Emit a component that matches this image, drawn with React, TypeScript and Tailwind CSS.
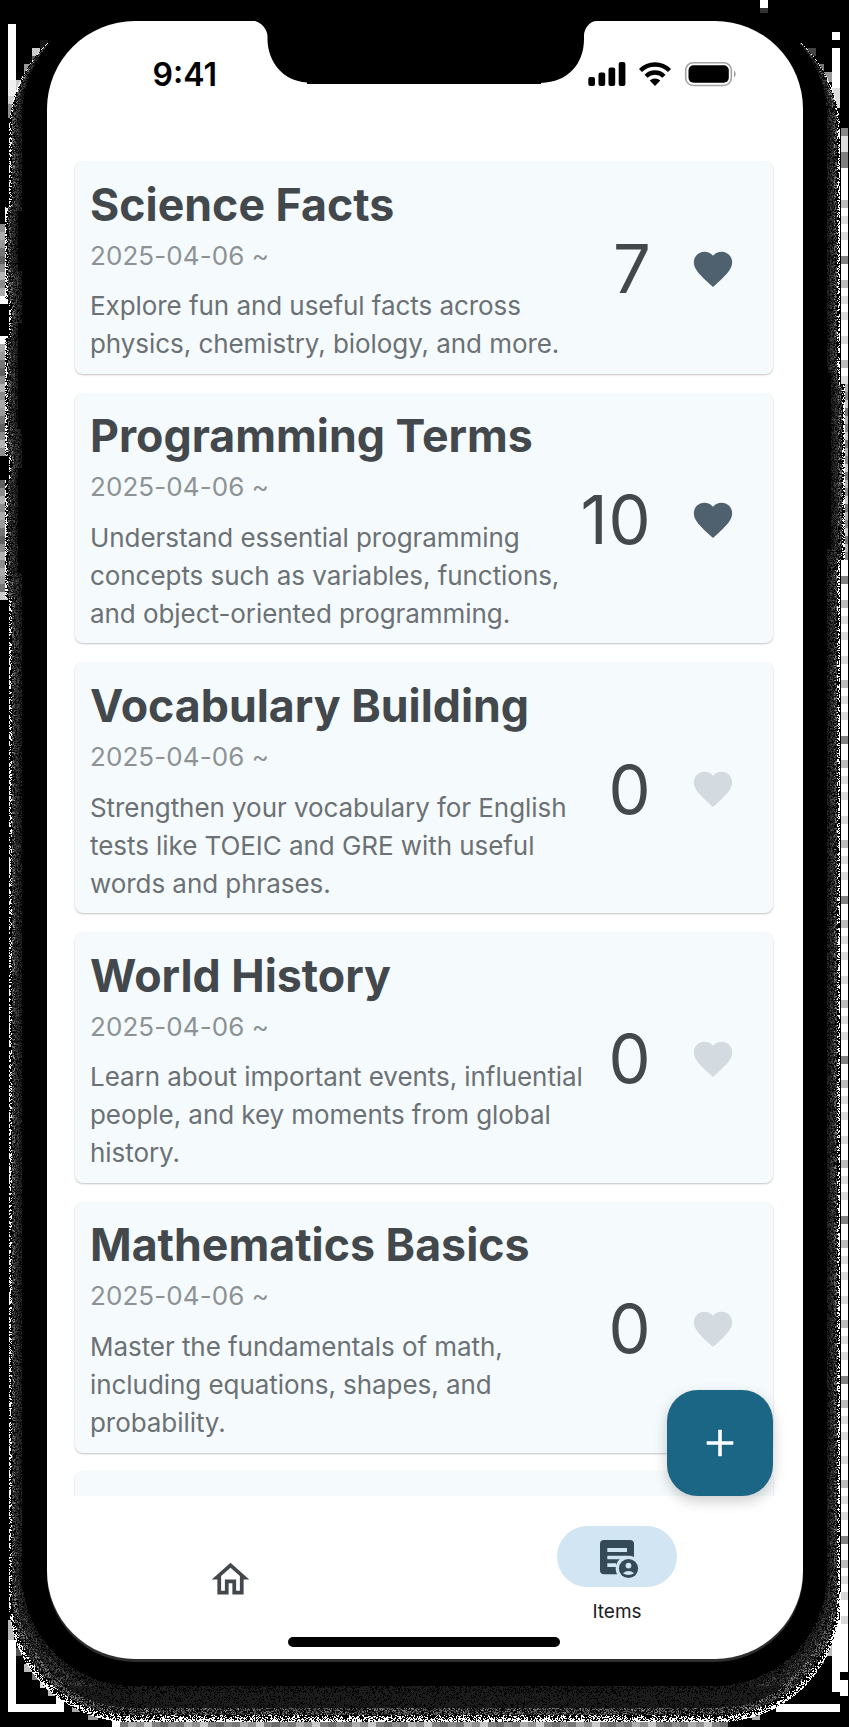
import React from "react";

type Deck = { title: string; lines: string[]; count: number; liked: boolean };

const decks: Deck[] = [
  {
    title: "Science Facts",
    lines: ["Explore fun and useful facts across", "physics, chemistry, biology, and more."],
    count: 7,
    liked: true,
  },
  {
    title: "Programming Terms",
    lines: ["Understand essential programming", "concepts such as variables, functions,", "and object-oriented programming."],
    count: 10,
    liked: true,
  },
  {
    title: "Vocabulary Building",
    lines: ["Strengthen your vocabulary for English", "tests like TOEIC and GRE with useful", "words and phrases."],
    count: 0,
    liked: false,
  },
  {
    title: "World History",
    lines: ["Learn about important events, influential", "people, and key moments from global", "history."],
    count: 0,
    liked: false,
  },
  {
    title: "Mathematics Basics",
    lines: ["Master the fundamentals of math,", "including equations, shapes, and", "probability."],
    count: 0,
    liked: false,
  },
];

// Signed distance to a rounded rectangle, negative inside.
function roundedDistance(x: number, y: number, l: number, t: number, r: number, b: number, rad: number) {
  const qx = Math.abs(x - (l + r) / 2) - (r - l) / 2 + rad;
  const qy = Math.abs(y - (t + b) / 2) - (b - t) / 2 + rad;
  return Math.hypot(Math.max(qx, 0), Math.max(qy, 0)) + Math.min(Math.max(qx, qy), 0) - rad;
}

const shades = ["#1c1c1c", "#303030", "#484848", "#686868", "#909090", "#ffffff"];

// Grainy shadow around the handset, one path per grey level.
function buildGrain(): string[] {
  let seed = 20250406;
  const random = () => {
    seed = (seed * 1664525 + 1013904223) >>> 0;
    return seed / 4294967296;
  };
  const parts: string[][] = shades.map(() => []);
  for (let y = 40; y < 1724; y++) {
    for (let x = 3; x < 848; x++) {
      if (y < 1570 && x > 50 && x < 800) continue;
      const leftButton = (y > 210 && y < 271) || (y > 322 && y < 429) || (y > 467 && y < 573);
      const rightButton = y > 372 && y < 549;
      const px = x + 0.5;
      const py = y + 0.5;
      const body = roundedDistance(px, py, leftButton ? 18 : 22, 5, rightButton ? 831 : 827, 1686, 112);
      if (body <= 0) continue;
      const wideLeft = y > 206 && y < 598 && !(y > 300 && y < 338) && !(y > 455 && y < 480);
      const wideRight = y > 384 && y < 560;
      const outer = roundedDistance(px, py, wideLeft ? 5 : 9, 11, wideRight ? 845 : 840, 1722, 121);
      if (outer >= 0) continue;
      const t = body / (body - outer);
      const n = random();
      let shade = -1;
      if (t > 0.8) shade = n < 0.2 + (t - 0.8) * 2.6 ? 5 : -1;
      else if (t > 0.5) shade = n < 0.3 ? -1 : n < 0.55 ? 0 : n < 0.78 ? 2 : n < 0.93 ? 3 : 4;
      else if (t > 0.2) shade = n < 0.2 ? -1 : n < 0.6 ? 0 : n < 0.85 ? 1 : 2;
      else shade = n < 0.35 ? -1 : n < 0.9 ? 0 : 1;
      if (py > 1686 && t < 0.6 && shade > 0) shade = 0;
      if (shade >= 0) parts[shade].push(`M${x} ${y}h1v1h-1z`);
    }
  }
  return parts.map((p) => p.join(""));
}

const grain = buildGrain();

type Block = [number, number, number, number, string];

const blocks: Block[] = [
  [8, 24, 8, 56, "#fff"],
  [8, 80, 8, 16, "#f0f0f0"],
  [8, 96, 8, 8, "#d5d5d5"],
  [8, 104, 8, 14, "#909090"],
  [16, 88, 6, 8, "#b0b0b0"],
  [16, 80, 8, 8, "#ccc"],
  [24, 64, 8, 8, "#999"],
  [24, 72, 6, 8, "#777"],
  [32, 48, 8, 8, "#ccc"],
  [32, 56, 6, 8, "#555"],
  [40, 40, 8, 8, "#181818"],
  [760, 0, 8, 8, "#fff"],
  [760, 8, 8, 5, "#333"],
  [832, 32, 8, 8, "#fff"],
  [832, 48, 8, 40, "#fff"],
  [832, 88, 8, 20, "#ddd"],
  [808, 48, 8, 8, "#444"],
  [818, 64, 6, 8, "#777"],
  [824, 72, 8, 10, "#999"],
  [8, 1620, 6, 20, "#bbb"],
  [8, 1640, 8, 72, "#fff"],
  [16, 1704, 48, 8, "#fff"],
  [56, 1696, 8, 8, "#fff"],
  [16, 1648, 8, 8, "#555"],
  [24, 1664, 8, 8, "#bbb"],
  [32, 1672, 8, 8, "#777"],
  [40, 1680, 8, 8, "#ddd"],
  [48, 1688, 8, 8, "#bbb"],
  [72, 1704, 8, 8, "#aaa"],
  [88, 1712, 10, 8, "#999"],
  [832, 1620, 8, 72, "#fff"],
  [840, 1592, 8, 104, "#fff"],
  [840, 1672, 8, 8, "#000"],
  [776, 1704, 64, 8, "#fff"],
  [824, 1640, 8, 16, "#bbb"],
  [816, 1656, 8, 8, "#666"],
  [808, 1664, 8, 8, "#888"],
  [800, 1672, 8, 8, "#ccc"],
  [792, 1680, 8, 8, "#777"],
  [784, 1688, 8, 8, "#bbb"],
  [776, 1696, 8, 8, "#999"],
  [752, 1704, 8, 16, "#aaa"],
  [841, 128, 7, 1464, "#fff"],
  [841, 128, 7, 8, "#888"],
  [841, 136, 7, 16, "#ddd"],
  [841, 152, 7, 16, "#808080"],
];

for (let y = 224; y < 600; y += 8) {
  if ((y >= 304 && y < 336) || (y >= 456 && y < 480)) continue;
  const tones = ["#8c8c8c", "#ababab", "#9a9a9a", "#757575", "#606060", "#8a8a8a", "#b4b4b4"];
  blocks.push([0, y, 8, 8, y === 296 || y === 336 ? "#fff" : y === 592 ? "#ccc" : tones[(y / 8) % 7]]);
}
for (let y = 200; y < 1590; y += 80) {
  blocks.push([841, y, 7, 8, "#bcbcbc"], [841, y + 16, 7, 8, "#dcdcdc"], [841, y + 32, 7, 8, "#dadada"]);
  blocks.push([841, y + 56, 7, 8, (y / 80) % 2 < 1 ? "#858585" : "#dadada"]);
}
for (let y = 384; y < 560; y += 8) {
  blocks.push([841, y, 7, 8, ["#b0b0b0", "#888", "#c8c8c8", "#777"][(y / 8) % 4]]);
}
for (let x = 112; x < 728; x += 8) {
  blocks.push([x, 1721, 8, 6, x === 112 ? "#fff" : ["#8c8c8c", "#777", "#adadad", "#909090", "#c8c8c8", "#808080", "#6c6c6c"][(x / 8) % 7]]);
}

function HandsetEdge() {
  return (
    <svg aria-hidden="true" className="pointer-events-none absolute inset-0" width="849" height="1727" viewBox="0 0 849 1727" shapeRendering="crispEdges">
      {blocks.map(([x, y, w, h, c], i) => (
        <rect key={i} x={x} y={y} width={w} height={h} fill={c} />
      ))}
      <rect x="9" y="11" width="831" height="1711" rx="121" fill="#000" />
      <path d="M5 206h8v94h-8zM5 338h8v117h-8zM5 480h8v118h-8zM836 384h9v176h-9z" fill="#000" />
      {grain.map((d, i) => (
        <path key={i} d={d} fill={shades[i]} />
      ))}
    </svg>
  );
}

function Notch() {
  return (
    <svg aria-hidden="true" className="absolute left-[200px] top-0" width="356" height="63" viewBox="247 21 356 63">
      <path d="M247 20H603V21H597C589 21 584 29 584 36V39C584 64 568 82 541 83V84H307V82.500C282 81 268 61 267.500 40V36C267 29 262 23 255 21H247Z" fill="#000" />
    </svg>
  );
}

function StatusIcons() {
  return (
    <svg aria-hidden="true" width="150" height="26" viewBox="588 61 150 26">
      <rect x="588.300" y="77" width="6.700" height="9" rx="2" />
      <rect x="598.500" y="72.500" width="6.700" height="13.500" rx="2" />
      <rect x="608.500" y="67.500" width="6.700" height="18.500" rx="2" />
      <rect x="618.700" y="62" width="6.700" height="24" rx="2" />
      <g fill="none" stroke="#000" strokeWidth="4.300">
        <path d="M640.500 70.500A20.500 20.500 0 0 1 669.500 70.500" />
        <path d="M646 76.200A12.800 12.800 0 0 1 664 76.200" />
      </g>
      <path d="M649.700 80.500A7.700 7.700 0 0 1 660.300 80.500L655 86Z" />
      <rect x="685.700" y="62.700" width="45.600" height="22.800" rx="7.500" fill="none" stroke="#a3a3a3" strokeWidth="1.600" />
      <rect x="688.500" y="65.300" width="40.300" height="17.500" rx="5" />
      <path d="M734 70.500a4.500 4.500 0 0 1 0 7z" fill="#9a9a9a" />
    </svg>
  );
}

function Heart({ liked }: { liked: boolean }) {
  return (
    <svg aria-hidden="true" className="mb-[3px] shrink-0" width="46" height="46" viewBox="0 0 24 24" fill={liked ? "#4f616e" : "#d3dae0"}>
      <path d="M12 21.350l-1.450-1.320C5.400 15.360 2 12.280 2 8.500 2 5.420 4.420 3 7.500 3c1.740 0 3.410.810 4.500 2.090C13.090 3.810 14.760 3 16.500 3 19.580 3 22 5.420 22 8.500c0 3.780-3.400 6.860-8.550 11.540L12 21.350z" />
    </svg>
  );
}

function DeckCard({ deck }: { deck: Deck }) {
  return (
    <article className="flex shrink-0 items-center rounded-[8px] bg-[#f5fafd] pt-[16.500px] pr-[37.500px] pb-[10.500px] pl-[15px] shadow-[0_1px_2px_rgba(0,0,0,0.24)]">
      <div className="min-w-0 flex-1 self-start whitespace-nowrap">
        <h2 className="text-[44.700px] leading-[54px] font-bold text-[#42484c]">{deck.title}</h2>
        <p className="mt-[5px] text-[26px] leading-[37.800px] tracking-[0.080px] text-[#8d9295]">2025-04-06 ~</p>
        <p className="mt-[13px] text-[26px] leading-[38px] tracking-[-0.060px] text-[#6b7174]">
          {deck.lines.map((line) => (
            <span key={line} className="block">
              {line}
            </span>
          ))}
        </p>
      </div>
      <span className="mr-[38px] mb-[2px] text-[66.800px] leading-[76px] tracking-[0.800px] text-[#42484c]">{deck.count}</span>
      <Heart liked={deck.liked} />
    </article>
  );
}

export default function App() {
  return (
    <div className="relative flex h-[1727px] w-[849px] overflow-hidden bg-black pt-[21px] pl-[47px] font-['Inter',sans-serif]">
      <HandsetEdge />
      <main className="relative flex h-[1638px] w-[756px] flex-col overflow-hidden rounded-[88px] bg-white shadow-[0_3px_0_#2e2e2e]">
        <Notch />
        <header className="flex h-[140px] shrink-0 items-start justify-between pt-[40px] pr-[65px] pl-[105.500px]">
          <span className="text-[32px] leading-[28px] font-semibold">9:41</span>
          <StatusIcons />
        </header>
        <section className="relative h-[1335px] shrink-0">
          <div className="flex h-full flex-col gap-[18.900px] overflow-hidden pr-[30px] pl-[28px]">
            {decks.map((deck) => (
              <DeckCard key={deck.title} deck={deck} />
            ))}
            <div className="h-[251px] shrink-0 rounded-[8px] bg-[#f5fafd] shadow-[0_1px_2px_rgba(0,0,0,0.24)]" />
          </div>
          <button aria-label="Add" className="absolute right-[30px] bottom-0 flex size-[106px] items-center justify-center rounded-[31px] bg-[#1b6585] shadow-[0_5px_14px_rgba(0,0,0,0.2)]">
            <svg width="28" height="28" viewBox="0 0 28 28" stroke="#fff" strokeWidth="3.600">
              <path d="M14 .700V27.300M.700 14H27.300" />
            </svg>
          </button>
        </section>
        <nav className="flex h-[141px] shrink-0">
          <div className="flex w-[367px] shrink-0 justify-center pt-[60.500px]">
            <svg width="45" height="45" viewBox="0 0 24 24" fill="#42484c">
              <path d="M12 5.690l5 4.500V18h-2v-6H9v6H7v-7.810l5-4.500M12 3L2 12h3v8h6v-6h2v6h6v-8h3L12 3z" />
            </svg>
          </div>
          <div className="ml-[17px] flex w-[372px] shrink-0 flex-col items-center pt-[30px]">
            <div className="flex h-[61px] w-[120px] items-center justify-center rounded-full bg-[#d1e5f2]">
              <svg width="46" height="46" viewBox="594 1533 46 46">
                <rect x="600" y="1539" width="34" height="34.300" rx="4" fill="#354a57" />
                <path d="M607.300 1547H627v4H607.300zM607.300 1554.700H627v3.600H607.300zM607.300 1562.300H616v3.700H607.300z" fill="#d1e5f2" />
                <circle cx="628.500" cy="1567.500" r="12.800" fill="#d1e5f2" />
                <circle cx="628.500" cy="1567.500" r="9.600" fill="#354a57" />
                <circle cx="628.500" cy="1564.600" r="2.900" fill="#d1e5f2" />
                <path d="M622.800 1572.200q5.700-4.400 11.400 0q-5.700 3.600-11.400 0z" fill="#d1e5f2" />
              </svg>
            </div>
            <span className="mt-[12px] text-[19px] leading-[26px] text-[#1c2023]">Items</span>
          </div>
        </nav>
        <div className="ml-[241px] h-[10px] w-[272px] shrink-0 rounded-full bg-black" />
      </main>
    </div>
  );
}
